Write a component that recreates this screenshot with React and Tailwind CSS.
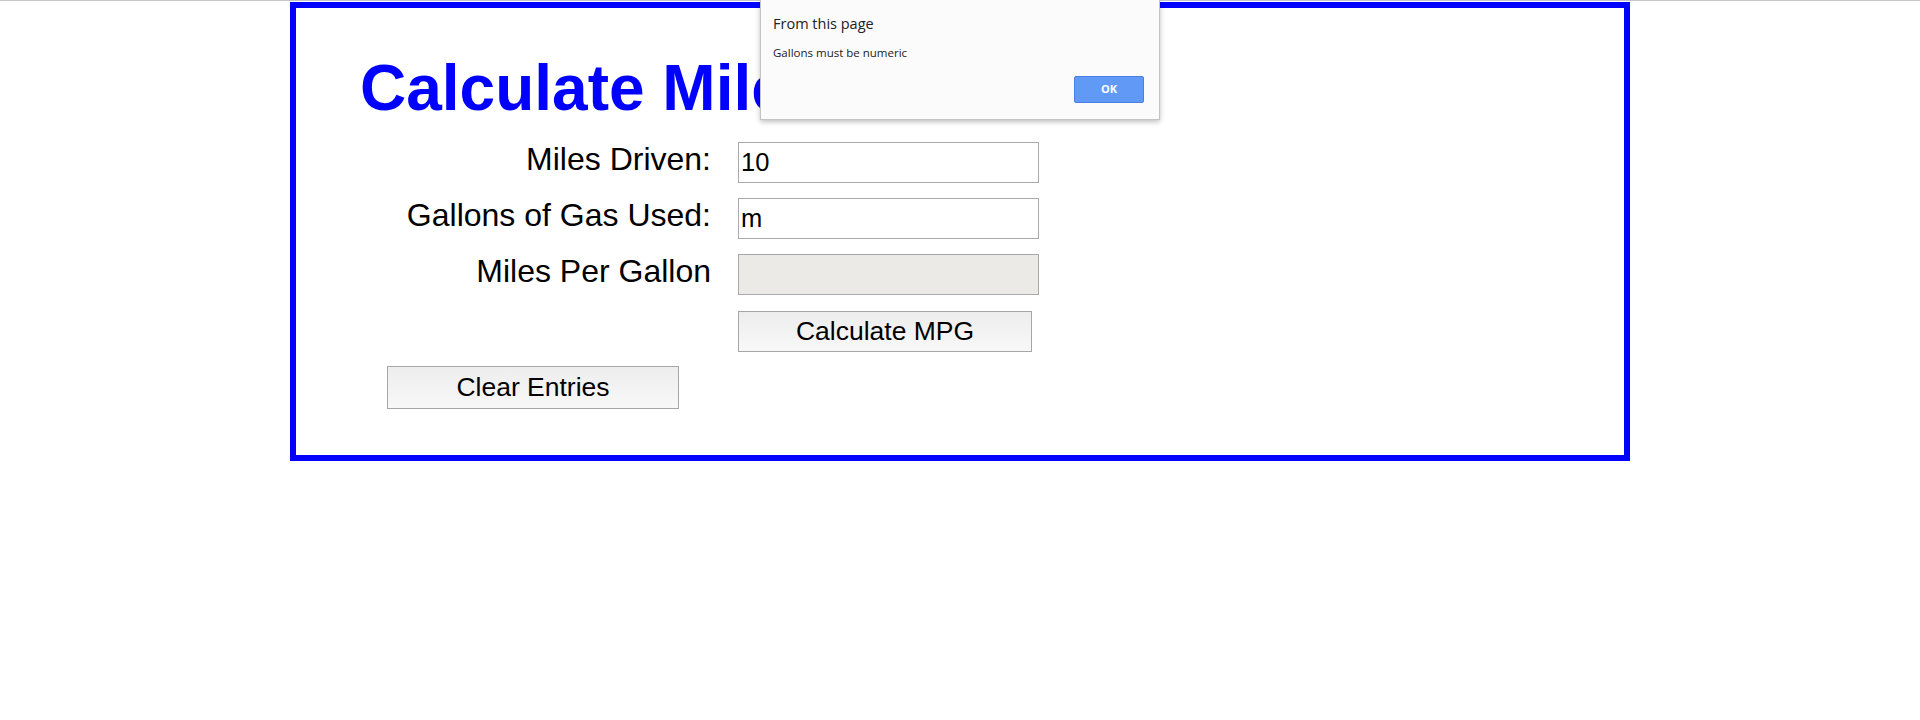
import React from "react";

/** MPG calculator page with the "Gallons must be numeric" alert open. */
export default function App() {
  const field =
    "h-[41px] w-[301px] border border-[#a9a9a9] px-[2px] text-[25.5px] text-black outline-none";
  const btn =
    "border border-[#a6a6a6] bg-gradient-to-b from-[#ededed] to-[#f8f8f8] text-[26.5px] text-black";
  const label = "mb-[7px] w-[415px] text-right text-[32px] leading-none text-black";

  return (
    <div className="relative min-h-screen bg-white font-['Liberation_Sans',Arial,sans-serif]">
      <div className="h-px bg-[#c6c6c6]" />

      <div className="mx-auto mt-px h-[459px] w-[1340px] border-[6px] border-[#0000ff] pl-[64px] pt-[48px]">
        <h1 className="text-[64px] font-bold leading-none text-[#0000ff]">Calculate Miles Per Gallon</h1>

        <div className="ml-[-64px] mt-[22px] flex flex-col">
          <div className="flex h-[41px] items-center">
            <label className={label}>Miles Driven:</label>
            <input className={`ml-[27px] ${field}`} defaultValue="10" />
          </div>
          <div className="mt-[15px] flex h-[41px] items-center">
            <label className={label}>Gallons of Gas Used:</label>
            <input className={`ml-[27px] ${field}`} defaultValue="m" />
          </div>
          <div className="mt-[15px] flex h-[41px] items-center">
            <label className={label}>Miles Per Gallon</label>
            <input className={`ml-[27px] bg-[#ebeae6] ${field}`} disabled />
          </div>
          <div className="mt-[16px] flex">
            <button className={`ml-[442px] h-[41px] w-[294px] ${btn}`}>Calculate MPG</button>
          </div>
          <div className="mt-[14px] flex">
            <button className={`ml-[91px] h-[43px] w-[292px] ${btn}`}>Clear Entries</button>
          </div>
        </div>
      </div>

      <div className="absolute left-[760px] top-0 h-[120px] w-[400px] border border-t-0 border-[#c3c3c3] bg-[#fbfbfb] pl-[12px] font-['Open_Sans','Noto_Sans',sans-serif] text-[#222] shadow-[0_2px_5px_rgba(0,0,0,0.25)]">
        <div className="pt-[14px] text-[14.5px] leading-[20px]">From this page</div>
        <div className="mt-[11px] text-[11.5px] leading-[16px]">Gallons must be numeric</div>
        <div className="mt-[15px] flex justify-end pr-[15px]">
          <button className="h-[27px] w-[70px] rounded-[2px] border border-[#4a7fe6] bg-[#6199f7] text-[11px] font-bold text-white">
            OK
          </button>
        </div>
      </div>
    </div>
  );
}
